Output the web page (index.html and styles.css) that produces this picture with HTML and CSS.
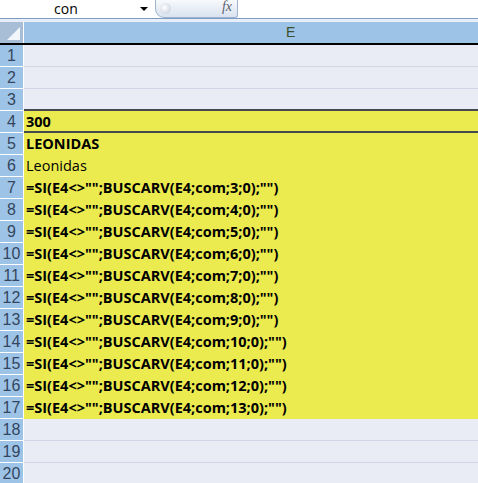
FILE: index.html
```html
<!DOCTYPE html>
<html>
<head>
<meta charset="utf-8">
<link rel="stylesheet" href="styles.css">
</head>
<body>
<div class="topbar">
  <div class="namebox"><span class="nametext">con</span><span class="arrow"></span></div>
  <div class="fxpill"><span class="knob"></span><span class="fx">fx</span></div>
</div>
<div class="sep"></div>
<div class="colhead">
  <div class="corner"><span class="tri"></span></div>
  <div class="colE">E</div>
</div>
<div class="grid">
  <div class="row"><div class="rh">1</div><div class="cell"></div></div>
  <div class="row"><div class="rh">2</div><div class="cell"></div></div>
  <div class="row r3"><div class="rh">3</div><div class="cell"></div></div>
  <div class="row r4"><div class="rh">4</div><div class="cell y b">300</div></div>
  <div class="row"><div class="rh">5</div><div class="cell y b">LEONIDAS</div></div>
  <div class="row"><div class="rh">6</div><div class="cell y">Leonidas</div></div>
  <div class="row"><div class="rh">7</div><div class="cell y b">=SI(E4&lt;&gt;"";BUSCARV(E4;com;3;0);"")</div></div>
  <div class="row"><div class="rh">8</div><div class="cell y b">=SI(E4&lt;&gt;"";BUSCARV(E4;com;4;0);"")</div></div>
  <div class="row"><div class="rh">9</div><div class="cell y b">=SI(E4&lt;&gt;"";BUSCARV(E4;com;5;0);"")</div></div>
  <div class="row"><div class="rh">10</div><div class="cell y b">=SI(E4&lt;&gt;"";BUSCARV(E4;com;6;0);"")</div></div>
  <div class="row"><div class="rh">11</div><div class="cell y b">=SI(E4&lt;&gt;"";BUSCARV(E4;com;7;0);"")</div></div>
  <div class="row"><div class="rh">12</div><div class="cell y b">=SI(E4&lt;&gt;"";BUSCARV(E4;com;8;0);"")</div></div>
  <div class="row"><div class="rh">13</div><div class="cell y b">=SI(E4&lt;&gt;"";BUSCARV(E4;com;9;0);"")</div></div>
  <div class="row"><div class="rh">14</div><div class="cell y b">=SI(E4&lt;&gt;"";BUSCARV(E4;com;10;0);"")</div></div>
  <div class="row"><div class="rh">15</div><div class="cell y b">=SI(E4&lt;&gt;"";BUSCARV(E4;com;11;0);"")</div></div>
  <div class="row"><div class="rh">16</div><div class="cell y b">=SI(E4&lt;&gt;"";BUSCARV(E4;com;12;0);"")</div></div>
  <div class="row"><div class="rh">17</div><div class="cell y b">=SI(E4&lt;&gt;"";BUSCARV(E4;com;13;0);"")</div></div>
  <div class="row"><div class="rh">18</div><div class="cell"></div></div>
  <div class="row"><div class="rh">19</div><div class="cell"></div></div>
  <div class="row"><div class="rh">20</div><div class="cell"></div></div>
</div>
</body>
</html>
```
FILE: styles.css
```css
html, body {
  margin: 0;
  padding: 0;
  background: #ffffff;
  overflow: hidden;
  font-family: "Open Sans", "Liberation Sans", sans-serif;
}
.topbar {
  height: 18px;
  display: flex;
  align-items: stretch;
  background: #ffffff;
}
.namebox {
  width: 155px;
  position: relative;
  display: flex;
  align-items: center;
}
.nametext {
  margin-left: 54px;
  font-size: 14px;
  color: #000;
  line-height: 18px;
}
.arrow {
  position: absolute;
  left: 140px;
  top: 7px;
  width: 0;
  height: 0;
  border-left: 4px solid transparent;
  border-right: 4px solid transparent;
  border-top: 4px solid #000;
}
.fxpill {
  width: 83px;
  height: 18px;
  border: 1px solid #9fb3cf;
  border-top: none;
  border-radius: 0 0 3px 9px;
  background: linear-gradient(#f7f9fc, #d9e3f0);
  position: relative;
  box-sizing: border-box;
}
.knob {
  position: absolute;
  left: 4px;
  top: 3px;
  width: 11px;
  height: 11px;
  border-radius: 50%;
  background: radial-gradient(circle at 40% 40%, #ffffff, #bfc9d8);
}
.fx {
  position: absolute;
  right: 5px;
  top: -1px;
  font-family: "Liberation Serif", serif;
  font-style: italic;
  font-size: 14px;
  color: #5a6270;
}
.sep {
  height: 1px;
  background: #7c9cc4;
  border-bottom: 3px solid #e8eef7;
}
.colhead {
  display: flex;
  height: 21px;
  border-bottom: 2px solid #000;
  background: #9dc3e6;
}
.corner {
  width: 23px;
  background: #a8bed7;
  border-right: 1px solid #ffffff;
  position: relative;
}
.tri {
  position: absolute;
  right: 3px;
  bottom: 3px;
  width: 0;
  height: 0;
  border-left: 13px solid transparent;
  border-bottom: 13px solid #f2f5f9;
}
.colE {
  flex: 1;
  padding-left: 262px;
  font-size: 14px;
  line-height: 21px;
  color: #3d4f2f;
  font-family: "Liberation Sans", sans-serif;
}
.grid {
  display: flex;
  flex-direction: column;
}
.row {
  display: flex;
  height: 22px;
}
.rh {
  width: 23px;
  height: 21px;
  background: #9dc3e6;
  border-right: 1px solid #ffffff;
  border-bottom: 1px solid #ffffff;
  font-size: 16px;
  line-height: 21px;
  text-align: center;
  color: #34465e;
  font-family: "Liberation Sans", sans-serif;
}
.cell {
  flex: 1;
  height: 21px;
  background: #e9ebf5;
  border-bottom: 1px solid #d2d5e5;
  padding-left: 2px;
  font-size: 14.5px;
  line-height: 21px;
  color: #000;
  white-space: nowrap;
}
.cell.y {
  background: #ebeb50;
  border-bottom-color: #ebeb50;
}
.cell.b {
  font-weight: bold;
}
.r3 .cell {
  height: 20px;
  border-bottom: 2px solid #44484f;
}
.r4 .cell {
  height: 20px;
  border-bottom: 2px solid #44484f;
}
```
